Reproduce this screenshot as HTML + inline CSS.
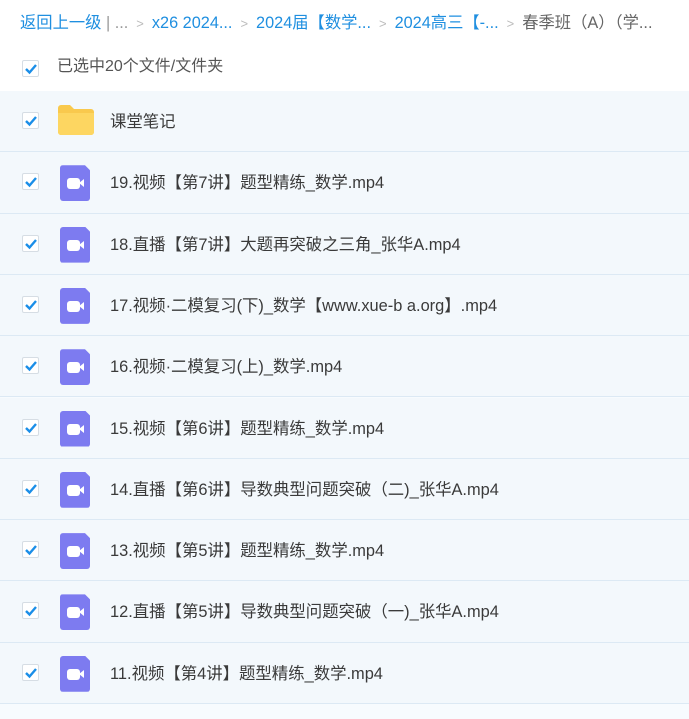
<!DOCTYPE html>
<html><head><meta charset="utf-8"><style>
*{margin:0;padding:0;box-sizing:border-box}
body{width:689px;height:719px;background:#f7fbfe;font-family:"Liberation Sans","Noto Sans CJK SC",sans-serif;overflow:hidden;position:relative}
.top{position:absolute;left:0;top:0;width:689px;height:91px;background:#fff}
.bc{position:absolute;left:20px;top:12px;font-size:16.3px;color:#1f8fe0;white-space:nowrap;line-height:22px}
.bc .g{color:#999}.bc .d{color:#666}.bc .s{color:#bbb;margin:0 8px;font-size:13px}
.sel{position:absolute;left:57px;top:56px;font-size:16px;color:#555;line-height:22px}
.cb{position:absolute;width:17px;height:17px;border:1px solid #d6dde4;background:#fff;border-radius:2px}
.cb svg{position:absolute;left:1px;top:1px}
.row{position:absolute;left:0;width:689px;height:61.3px;background:#f3f8fc;border-bottom:1px solid #dce9f4}
.row .cb{left:22px;top:21px}
.ic{position:absolute;left:60px;top:13px;width:30px;height:36px;background:#7d7bf0;border-radius:3px;clip-path:polygon(0 0,25px 0,30px 5px,30px 36px,0 36px)}
.ic i{position:absolute;left:7px;top:13px;width:13px;height:11px;background:#fff;border-radius:3px}
.ic b{position:absolute;left:19px;top:14px;width:0;height:0;border-top:4.5px solid transparent;border-bottom:4.5px solid transparent;border-right:5px solid #fff}
.fd{position:absolute;left:58px;top:14px;width:36px;height:30px}
.t{position:absolute;left:110px;top:20px;font-size:16.4px;color:#3a3a3a;line-height:22px;white-space:nowrap}
</style></head><body>
<div class="top"></div>
<div class="bc">返回上一级<span class="g"> | ...</span><span class="s">&gt;</span>x26 2024...<span class="s">&gt;</span>2024届【数学...<span class="s">&gt;</span>2024高三【-...<span class="s">&gt;</span><span class="d">春季班（A）（学...</span></div>
<div class="cb" style="left:22px;top:60px"><svg width="14" height="14"><path d="M2 7l3.5 3.5L12 3" stroke="#1a8ee8" stroke-width="2.4" fill="none"/></svg></div>
<div class="sel">已选中20个文件/文件夹</div>

<div class="row" style="top:91px"><div class="cb"><svg width="14" height="14"><path d="M2 7l3.5 3.5L12 3" stroke="#1a8ee8" stroke-width="2.4" fill="none"/></svg></div>
<svg class="fd" viewBox="0 0 36 30"><path d="M0 3a3 3 0 0 1 3-3h9l4 4h17a3 3 0 0 1 3 3v20a3 3 0 0 1-3 3H3a3 3 0 0 1-3-3z" fill="#f9c94d"/><path d="M0 8h36v19a3 3 0 0 1-3 3H3a3 3 0 0 1-3-3z" fill="#fdd661"/></svg>
<div class="t">课堂笔记</div></div>

<div class="row" style="top:152.3px"><div class="cb"><svg width="14" height="14"><path d="M2 7l3.5 3.5L12 3" stroke="#1a8ee8" stroke-width="2.4" fill="none"/></svg></div><div class="ic"><i></i><b></b></div><div class="t">19.视频【第7讲】题型精练_数学.mp4</div></div>
<div class="row" style="top:213.6px"><div class="cb"><svg width="14" height="14"><path d="M2 7l3.5 3.5L12 3" stroke="#1a8ee8" stroke-width="2.4" fill="none"/></svg></div><div class="ic"><i></i><b></b></div><div class="t">18.直播【第7讲】大题再突破之三角_张华A.mp4</div></div>
<div class="row" style="top:274.9px"><div class="cb"><svg width="14" height="14"><path d="M2 7l3.5 3.5L12 3" stroke="#1a8ee8" stroke-width="2.4" fill="none"/></svg></div><div class="ic"><i></i><b></b></div><div class="t">17.视频·二模复习(下)_数学【www.xue-b a.org】.mp4</div></div>
<div class="row" style="top:336.2px"><div class="cb"><svg width="14" height="14"><path d="M2 7l3.5 3.5L12 3" stroke="#1a8ee8" stroke-width="2.4" fill="none"/></svg></div><div class="ic"><i></i><b></b></div><div class="t">16.视频·二模复习(上)_数学.mp4</div></div>
<div class="row" style="top:397.5px"><div class="cb"><svg width="14" height="14"><path d="M2 7l3.5 3.5L12 3" stroke="#1a8ee8" stroke-width="2.4" fill="none"/></svg></div><div class="ic"><i></i><b></b></div><div class="t">15.视频【第6讲】题型精练_数学.mp4</div></div>
<div class="row" style="top:458.8px"><div class="cb"><svg width="14" height="14"><path d="M2 7l3.5 3.5L12 3" stroke="#1a8ee8" stroke-width="2.4" fill="none"/></svg></div><div class="ic"><i></i><b></b></div><div class="t">14.直播【第6讲】导数典型问题突破（二)_张华A.mp4</div></div>
<div class="row" style="top:520.1px"><div class="cb"><svg width="14" height="14"><path d="M2 7l3.5 3.5L12 3" stroke="#1a8ee8" stroke-width="2.4" fill="none"/></svg></div><div class="ic"><i></i><b></b></div><div class="t">13.视频【第5讲】题型精练_数学.mp4</div></div>
<div class="row" style="top:581.4px"><div class="cb"><svg width="14" height="14"><path d="M2 7l3.5 3.5L12 3" stroke="#1a8ee8" stroke-width="2.4" fill="none"/></svg></div><div class="ic"><i></i><b></b></div><div class="t">12.直播【第5讲】导数典型问题突破（一)_张华A.mp4</div></div>
<div class="row" style="top:642.7px"><div class="cb"><svg width="14" height="14"><path d="M2 7l3.5 3.5L12 3" stroke="#1a8ee8" stroke-width="2.4" fill="none"/></svg></div><div class="ic"><i></i><b></b></div><div class="t">11.视频【第4讲】题型精练_数学.mp4</div></div>
</body></html>
